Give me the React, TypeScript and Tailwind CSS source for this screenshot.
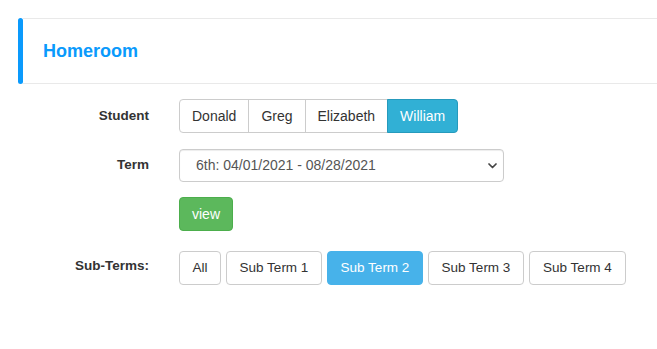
import React from "react";

const font = { fontFamily: '"Liberation Sans", Arial, sans-serif' };

export default function App() {
  const students = ["Donald", "Greg", "Elizabeth", "William"];
  const subTerms = [
    { s: "All", w: "w-[42px]" },
    { s: "Sub Term 1", w: "w-[96px]" },
    { s: "Sub Term 2", w: "w-[96px]" },
    { s: "Sub Term 3", w: "w-[96px]" },
    { s: "Sub Term 4", w: "w-[97px]" },
  ];
  return (
    <div className="w-[657px] h-[349px] bg-white pt-[18px] pl-[18px] text-[#333]" style={font}>
      <div className="flex h-[66px]">
        <div className="w-[5px] h-full bg-[#0a9afc] rounded-[3px]" />
        <div className="flex-1 flex items-center border-y border-[#e9e9e9] pl-5">
          <span className="text-[18px] font-bold text-[#0a9afc] leading-none">Homeroom</span>
        </div>
      </div>

      <div className="mt-[15px] flex flex-col">
        {/* Student */}
        <div className="flex items-center">
          <div className="w-[131px] text-right text-[13.5px] font-bold text-[#333]">Student</div>
          <div className="ml-[30px] flex">
            {students.map((s, i) => {
              const active = s === "William";
              return (
                <div
                  key={s}
                  className={
                    "h-[34px] flex items-center px-3 text-[14px] border " +
                    (i > 0 ? "-ml-px " : "") +
                    (i === 0 ? "rounded-l-[4px] " : "") +
                    (i === students.length - 1 ? "rounded-r-[4px] " : "") +
                    (active
                      ? "bg-[#31b0d5] border-[#269abc] text-white relative"
                      : "bg-white border-[#ccc] text-[#333]")
                  }
                >
                  {s}
                </div>
              );
            })}
          </div>
        </div>

        {/* Term */}
        <div className="flex items-center mt-[16px]">
          <div className="w-[131px] text-right text-[13.5px] font-bold text-[#333]">Term</div>
          <div className="ml-[30px] w-[325px] h-[33px] border border-[#ccc] rounded-[4px] flex items-center pl-[16px] pr-[6px] text-[14px] text-[#555] shadow-[inset_0_1px_1px_rgba(0,0,0,0.075)]">
            <span className="flex-1">6th: 04/01/2021 - 08/28/2021</span>
            <svg width="9" height="6" viewBox="0 0 9 6">
              <path d="M1 1 L4.5 4.5 L8 1" fill="none" stroke="#444" strokeWidth="1.7" strokeLinecap="round" strokeLinejoin="round" />
            </svg>
          </div>
        </div>

        {/* View */}
        <div className="flex items-center mt-[15px]">
          <div className="w-[131px]" />
          <div className="ml-[30px] h-[34px] px-3 flex items-center rounded-[4px] border border-[#4cae4c] bg-[#5cb85c] text-white text-[14px]">
            view
          </div>
        </div>

        {/* Sub-Terms */}
        <div className="flex items-start mt-[20px]">
          <div className="w-[131px] text-right text-[13.5px] font-bold text-[#333] pt-[5px]">Sub-Terms:</div>
          <div className="ml-[30px] flex gap-[5px]">
            {subTerms.map(({ s, w }) => {
              const active = s === "Sub Term 2";
              return (
                <div
                  key={s}
                  className={
                    "h-[34px] flex items-center justify-center text-[13.5px] border rounded-[4px] " +
                    w +
                    " " +
                    (active
                      ? "bg-[#47b2ea] border-[#47b2ea] text-white"
                      : "bg-white border-[#ccc] text-[#333]")
                  }
                >
                  {s}
                </div>
              );
            })}
          </div>
        </div>
      </div>
    </div>
  );
}
